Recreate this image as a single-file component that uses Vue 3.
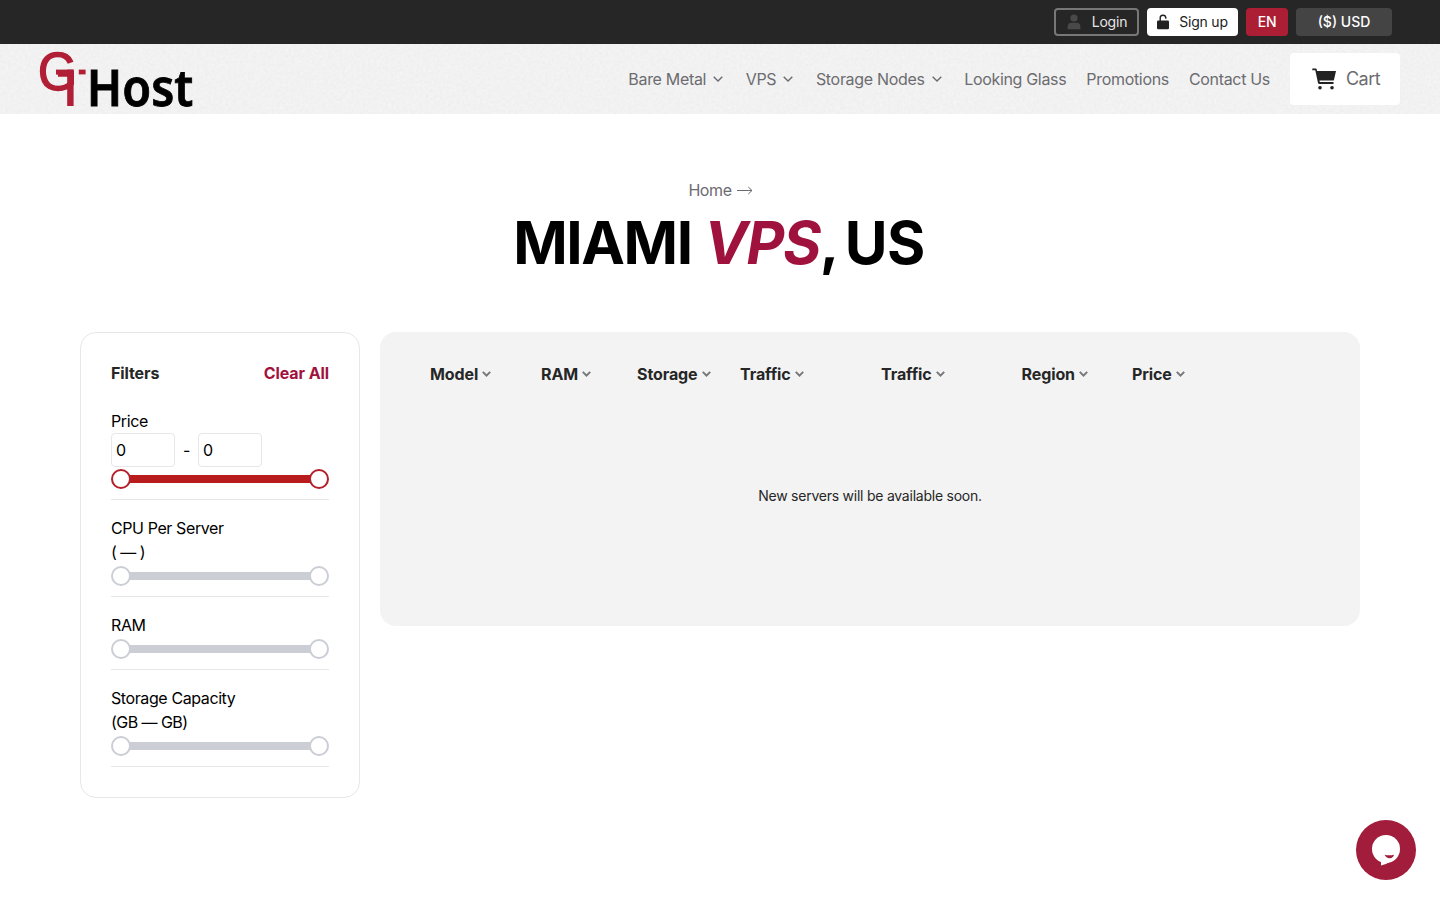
<template>
  <div class="page">
    <div class="topbar">
      <a class="top-button login" href="#">
        <svg class="user-icon" viewBox="0 0 14 16">
          <circle cx="7" cy="4" r="3.6" />
          <path d="M0.6 15.2v-2.4a4 4 0 0 1 4-4h4.8a4 4 0 0 1 4 4v2.4z" />
        </svg>
        <span>Login</span>
      </a>
      <a class="top-button signup" href="#">
        <svg class="lock-icon" viewBox="0 0 12 16">
          <path d="M3.2 7V4.1a2.8 2.8 0 0 1 5.6-.2v.8" fill="none" stroke="#222" stroke-width="1.4" />
          <rect x="0" y="6.6" width="12" height="8.6" rx="1.2" fill="#222" />
        </svg>
        <span>Sign up</span>
      </a>
      <a class="top-button lang" href="#"><span>EN</span></a>
      <a class="top-button currency" href="#"><span>($) USD</span></a>
    </div>

    <header class="header">
      <svg class="texture" width="100%" height="100%">
        <filter id="grain" x="0" y="0" width="100%" height="100%">
          <feTurbulence type="fractalNoise" baseFrequency="0.35" numOctaves="3" seed="4" />
          <feColorMatrix type="matrix" values="0 0 0 0 1  0 0 0 0 1  0 0 0 0 1  1.2 0 0 0 -0.3" />
        </filter>
        <rect width="100%" height="100%" filter="url(#grain)" />
      </svg>
      <a class="logo" href="#">
        <svg width="156" height="60" viewBox="0 0 156 60">
          <g fill="#b01f35">
            <text class="logo-g" x="-2" y="41" textLength="39" lengthAdjust="spacingAndGlyphs">G</text>
            <rect x="16" y="20.6" width="17.6" height="5" />
            <rect x="27.2" y="20.6" width="6.4" height="36.4" />
            <rect x="38.8" y="20.6" width="6.8" height="4.8" />
          </g>
          <text class="logo-host" x="46.8" y="56.6" textLength="106.5" lengthAdjust="spacingAndGlyphs">Host</text>
        </svg>
      </a>
      <nav class="nav">
        <a v-for="item in navItems" :key="item.label" class="nav-link" href="#">
          <span>{{ item.label }}</span>
          <svg v-if="item.menu" class="nav-chevron" viewBox="0 0 10 6">
            <path d="M0.7 0.7L5 5L9.3 0.7" />
          </svg>
        </a>
        <a class="cart" href="#">
          <svg class="cart-icon" viewBox="0 0 24 22">
            <path d="M0.3 0.6h3.5q.7 0 .9.7l.4 1.7H24l-2 8.7q-.2.9-1 .9H7.5l.3 1.4h13.7v1.9H7q-.8 0-1-.8L3.3 2.2h-3z" />
            <circle cx="8" cy="19.7" r="1.8" />
            <circle cx="20" cy="19.7" r="1.8" />
          </svg>
          <span>Cart</span>
        </a>
      </nav>
    </header>

    <div class="heading">
      <a class="breadcrumb" href="#">
        <span>Home</span>
        <svg viewBox="0 0 16 9"><path d="M0 4.5H15M11.3 1L15 4.5L11.3 8" /></svg>
      </a>
      <h1 class="title">MIAMI <em>VPS</em><span class="country">, US</span></h1>
    </div>

    <main class="content">
      <aside class="filters">
        <div class="filters-head">
          <span>Filters</span>
          <a class="clear" href="#" @click.prevent="clearAll">Clear All</a>
        </div>
        <section class="filter">
          <div>Price</div>
          <div class="price-inputs">
            <input v-model="minPrice" type="text" />
            <span>-</span>
            <input v-model="maxPrice" type="text" />
          </div>
          <div class="slider active"><i></i><i></i></div>
        </section>
        <section v-for="f in filters" :key="f.label" class="filter">
          <div>{{ f.label }}</div>
          <div v-if="f.range" class="range">{{ f.range }}</div>
          <div class="slider"><i></i><i></i></div>
        </section>
      </aside>

      <section class="servers">
        <div class="columns">
          <div v-for="(col, i) in columns" :key="i" class="column">
            <span>{{ col }}</span>
            <svg viewBox="0 0 9 6"><path d="M0.8 0.9L4.5 4.6L8.2 0.9" /></svg>
          </div>
        </div>
        <p class="empty">New servers will be available soon.</p>
      </section>
    </main>

    <button class="chat" type="button">
      <svg viewBox="0 0 60 60">
        <g fill="#fff">
          <circle cx="30" cy="29" r="14" />
          <path d="M25 39v6.5q5-1 9-3.8z" />
        </g>
        <path d="M28.7 34.8q4.6 1 9.3 0q-.8 3.4-4.4 3.4t-4.9-3.4z" fill="#a11d3b" />
      </svg>
    </button>
  </div>
</template>

<script setup>
import { ref } from 'vue';

const minPrice = ref('0');
const maxPrice = ref('0');

const navItems = [
  { label: 'Bare Metal', menu: true },
  { label: 'VPS', menu: true },
  { label: 'Storage Nodes', menu: true },
  { label: 'Looking Glass' },
  { label: 'Promotions' },
  { label: 'Contact Us' },
];

const filters = [
  { label: 'CPU Per Server', range: '( — )' },
  { label: 'RAM' },
  { label: 'Storage Capacity', range: '(GB — GB)' },
];

const columns = ['Model', 'RAM', 'Storage', 'Traffic', 'Traffic', 'Region', 'Price'];

function clearAll() {
  minPrice.value = '0';
  maxPrice.value = '0';
}
</script>

<style>
body {
  margin: 0;
  background: #fff;
}
</style>

<style scoped>
* {
  box-sizing: border-box;
}

.page {
  min-height: 900px;
  font-family: Inter, 'Liberation Sans', sans-serif;
  font-size: 16px;
  line-height: 24px;
  letter-spacing: -0.025em;
  color: #000;
}

a {
  color: inherit;
  text-decoration: none;
}

svg {
  display: block;
  flex: none;
}

.topbar {
  display: flex;
  justify-content: flex-end;
  align-items: center;
  gap: 8px;
  height: 44px;
  padding-right: 48px;
  background: #262626;
}

.top-button {
  display: flex;
  align-items: center;
  justify-content: center;
  height: 28px;
  border-radius: 4px;
  font-size: 14px;
  letter-spacing: -0.015em;
  color: #fff;
}

.login {
  width: 85px;
  gap: 11px;
  padding-left: 1px;
  border: 2px solid #777;
  color: #e5e5e5;
}

.user-icon {
  width: 14px;
  height: 16px;
  fill: #494949;
}

.signup {
  width: 91px;
  gap: 10px;
  background: #fff;
  color: #222;
}

.lock-icon {
  width: 12px;
  height: 16px;
}

.lang {
  width: 42px;
  background: #ab1e33;
  font-weight: 500;
}

.currency {
  width: 96px;
  background: #444;
  font-weight: 500;
  letter-spacing: 0;
}

.header {
  position: relative;
  display: flex;
  justify-content: space-between;
  align-items: center;
  height: 70px;
  padding: 0 40px;
  background: #efefef;
}

.texture {
  position: absolute;
  inset: 0;
  opacity: 0.5;
}

.logo {
  position: relative;
}

.logo svg {
  overflow: visible;
}

.logo-g {
  font: 53px 'Liberation Sans', Arial, sans-serif;
  letter-spacing: 0;
  stroke: #b01f35;
  stroke-width: 1.5px;
}

.logo-host {
  font: 600 50px 'Noto Sans', 'Open Sans', sans-serif;
  letter-spacing: 0;
  stroke: #000;
  stroke-width: 0.8px;
}

.nav {
  position: relative;
  display: flex;
  align-items: center;
  gap: 20px;
  letter-spacing: -0.02em;
  color: #6c6c70;
}

.nav-link {
  display: flex;
  align-items: center;
  gap: 7px;
}

.nav-chevron {
  width: 10px;
  height: 6px;
  margin-right: 2.6px;
  fill: none;
  stroke: #6c6c70;
  stroke-width: 1.4;
}

.cart {
  display: flex;
  align-items: center;
  gap: 10px;
  width: 110px;
  height: 52px;
  padding-left: 22px;
  border-radius: 4px;
  background: #fff;
  font-size: 18px;
  letter-spacing: -0.03em;
}

.cart-icon {
  width: 24px;
  height: 22px;
  fill: #222;
}

.heading {
  display: flex;
  flex-direction: column;
  align-items: center;
  padding-top: 64px;
}

.breadcrumb {
  display: flex;
  align-items: center;
  gap: 5px;
  padding-left: 1px;
  color: #6c6c70;
}

.breadcrumb svg {
  width: 16px;
  height: 9px;
  fill: none;
  stroke: #6c6c70;
  stroke-width: 1;
}

.title {
  margin: 11px 0 -1px;
  padding-right: 2px;
  font-size: 58.5px;
  line-height: 60px;
  font-weight: 700;
  letter-spacing: -0.024em;
  white-space: nowrap;
}

.title em {
  color: #a0123e;
}

.country {
  letter-spacing: -0.01em;
  word-spacing: -5.5px;
}

.content {
  display: flex;
  align-items: flex-start;
  gap: 20px;
  padding: 60px 80px 0;
}

.filters {
  flex: none;
  width: 280px;
  height: 466px;
  padding: 28px 30px;
  border: 1px solid #e5e7eb;
  border-radius: 16px;
}

.filters-head {
  display: flex;
  justify-content: space-between;
  margin-bottom: 24px;
  font-weight: 700;
  letter-spacing: -0.006em;
  color: #262626;
}

.clear {
  color: #a0123e;
}

.filter {
  margin-bottom: 16px;
  padding-bottom: 10px;
  border-bottom: 1px solid #e5e7eb;
}

.range {
  letter-spacing: -0.034em;
}

.price-inputs {
  display: flex;
  align-items: center;
  gap: 8px;
}

.price-inputs input {
  width: 64px;
  height: 34px;
  padding: 0 4px;
  border: 1px solid #e5e7eb;
  border-radius: 4px;
  font: inherit;
}

.slider {
  display: flex;
  align-items: center;
  justify-content: space-between;
  height: 20px;
  margin-top: 2px;
  background: linear-gradient(#cbced5, #cbced5) center / 200px 8px no-repeat;
}

.slider i {
  width: 20px;
  height: 20px;
  border: 2px solid #cbced5;
  border-radius: 50%;
  background: #fff;
}

.slider.active {
  background-image: linear-gradient(#b91c1c, #b91c1c);
}

.slider.active i {
  border-color: #b3202a;
}

.servers {
  flex: 1;
  height: 294px;
  padding: 30px 50px;
  border-radius: 16px;
  background: #f3f3f3;
}

.columns {
  display: grid;
  grid-template-columns: 111px 96px 103px 141px 140.5px 110.5px 1fr;
  font-weight: 700;
  letter-spacing: -0.006em;
  color: #262626;
}

.column {
  display: flex;
  align-items: center;
  gap: 4px;
}

.column svg {
  width: 9px;
  height: 6px;
  fill: none;
  stroke: #77777b;
  stroke-width: 2;
}

.empty {
  margin: 98px 0 0;
  font-size: 14px;
  letter-spacing: -0.017em;
  text-align: center;
  color: #262626;
}

.chat {
  position: fixed;
  right: 24px;
  bottom: 20px;
  width: 60px;
  height: 60px;
  padding: 0;
  border: none;
  border-radius: 50%;
  background: #a11d3b;
  cursor: pointer;
}
</style>
